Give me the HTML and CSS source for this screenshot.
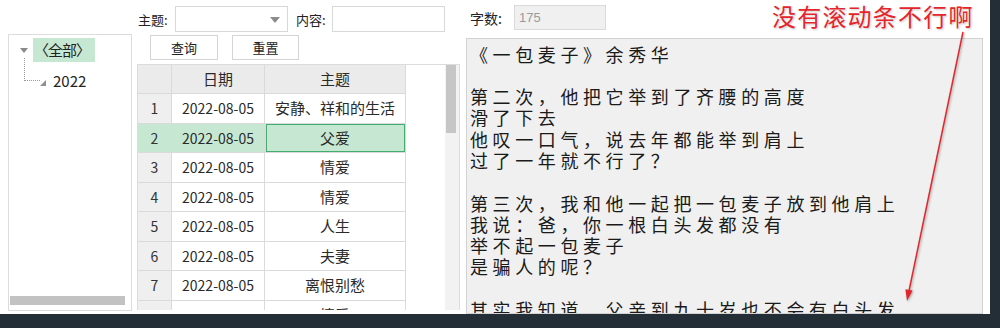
FILE: index.html
```html
<!DOCTYPE html>
<html lang="zh-CN">

<head>
    <meta charset="UTF-8">
    <title>诗歌浏览</title>
    <link rel="stylesheet" href="styles.css">
</head>

<body>
    <div class="window">
        <div class="tree-col">
            <div class="tree-panel">
                <div class="tree-root">
                    <span class="tree-toggle"></span>
                    <span class="tree-label selected">〈全部〉</span>
                </div>
                <div class="tree-child">
                    <span class="tree-leaf"></span>
                    <span class="tree-label">2022</span>
                </div>
                <div class="tree-scroll"><span></span></div>
            </div>
        </div>

        <div class="mid-col">
            <div class="filter-row">
                <label>主题:</label>
                <div class="select-box"><span class="select-arrow"></span></div>
                <label class="second">内容:</label>
                <div class="input-box"></div>
            </div>
            <div class="btn-row">
                <span class="btn">查询</span>
                <span class="btn">重置</span>
            </div>
            <div class="grid-panel">
                <table class="grid">
                    <thead>
                        <tr>
                            <th class="num"></th>
                            <th class="date">日期</th>
                            <th class="topic">主题</th>
                        </tr>
                    </thead>
                    <tbody>
                        <tr>
                            <td class="num">1</td>
                            <td>2022-08-05</td>
                            <td class="topic">安静、祥和的生活</td>
                        </tr>
                        <tr class="current">
                            <td class="num">2</td>
                            <td>2022-08-05</td>
                            <td class="topic focus">父爱</td>
                        </tr>
                        <tr>
                            <td class="num">3</td>
                            <td>2022-08-05</td>
                            <td class="topic">情爱</td>
                        </tr>
                        <tr>
                            <td class="num">4</td>
                            <td>2022-08-05</td>
                            <td class="topic">情爱</td>
                        </tr>
                        <tr>
                            <td class="num">5</td>
                            <td>2022-08-05</td>
                            <td class="topic">人生</td>
                        </tr>
                        <tr>
                            <td class="num">6</td>
                            <td>2022-08-05</td>
                            <td class="topic">夫妻</td>
                        </tr>
                        <tr>
                            <td class="num">7</td>
                            <td>2022-08-05</td>
                            <td class="topic">离恨别愁</td>
                        </tr>
                        <tr>
                            <td class="num">8</td>
                            <td>2022-08-05</td>
                            <td class="topic">情爱</td>
                        </tr>
                    </tbody>
                </table>
                <div class="grid-fill"></div>
                <div class="vscroll"><span></span></div>
            </div>
        </div>

        <div class="text-col">
            <div class="count-row">
                <label>字数:</label>
                <div class="count-box">175</div>
            </div>
            <div class="poem">《一包麦子》余秀华

第二次，他把它举到了齐腰的高度
滑了下去
他叹一口气，说去年都能举到肩上
过了一年就不行了？

第三次，我和他一起把一包麦子放到他肩上
我说：爸，你一根白头发都没有
举不起一包麦子
是骗人的呢？

其实我知道，父亲到九十岁也不会有白头发</div>
        </div>

        <div class="note">没有滚动条不行啊</div>
        <svg class="note-arrow" width="1000" height="328" viewBox="0 0 1000 328">
            <line x1="963" y1="32" x2="909" y2="291" stroke="#e3262b" stroke-width="1.5" />
            <polygon points="907,301 912.6,290.6 905.4,289.2" fill="#e3262b" />
        </svg>
    </div>
</body>

</html>
```

FILE: styles.css
```css
body,
div,
table,
th,
td,
label,
span {
    padding: 0;
    margin: 0;
}

body {
    width: 1000px;
    height: 328px;
    overflow: hidden;
    background: #232e37;
    font-family: "Noto Sans CJK SC", "Noto Sans", sans-serif;
    color: #222;
}

.window {
    position: relative;
    display: flex;
    width: 990px;
    height: 314px;
    background: #fff;
    overflow: hidden;
}

/* 左侧树 */
.tree-col {
    margin-left: 8px;
    width: 124px;
    padding-top: 34px;
    padding-bottom: 3px;
    box-sizing: border-box;
}

.tree-panel {
    position: relative;
    height: 100%;
    border: 1px solid #dcdcdc;
    box-sizing: border-box;
}

.tree-root {
    display: flex;
    align-items: center;
    margin-top: 3px;
    height: 24px;
}

.tree-toggle {
    width: 0;
    height: 0;
    margin-left: 11px;
    margin-right: 5px;
    border-left: 4px solid transparent;
    border-right: 4px solid transparent;
    border-top: 5px solid #8a8a8a;
}

.tree-label {
    font-size: 15px;
    line-height: 24px;
}

.tree-label.selected {
    width: 62px;
    padding-left: 1px;
    box-sizing: border-box;
    background: #c6e8d3;
    letter-spacing: -1px;
}

.tree-child {
    position: relative;
    display: flex;
    align-items: center;
    height: 24px;
    margin-top: 7px;
}

.tree-child::before {
    content: "";
    position: absolute;
    left: 15px;
    top: -11px;
    width: 15px;
    height: 22px;
    border-left: 1px dotted #9a9a9a;
    border-bottom: 1px dotted #9a9a9a;
}

.tree-leaf {
    width: 0;
    height: 0;
    margin-left: 31px;
    margin-right: 7px;
    margin-top: 3px;
    border-left: 6px solid transparent;
    border-bottom: 6px solid #8f8f8f;
}

.tree-scroll {
    position: absolute;
    left: 1px;
    right: 1px;
    bottom: 4px;
    height: 10px;
}

.tree-scroll span {
    display: block;
    width: 115px;
    height: 9px;
    background: #c2c2c2;
}

/* 中间 */
.mid-col {
    margin-left: 5px;
    width: 323px;
    display: flex;
    flex-direction: column;
}

.filter-row {
    display: flex;
    align-items: center;
    margin-top: 6px;
    height: 26px;
    font-size: 13px;
}

.filter-row label {
    width: 38px;
    padding-left: 1px;
    box-sizing: border-box;
}

.filter-row label.second {
    margin-left: 7px;
    width: 37px;
}

.select-box,
.input-box {
    position: relative;
    width: 113px;
    height: 26px;
    border: 1px solid #d8d8d8;
    box-sizing: border-box;
    background: #fff;
}

.select-arrow {
    position: absolute;
    right: 7px;
    top: 10px;
    width: 0;
    height: 0;
    border-left: 5px solid transparent;
    border-right: 5px solid transparent;
    border-top: 6px solid #8c8c8c;
}

.btn-row {
    display: flex;
    gap: 14px;
    margin-top: 3px;
    margin-left: 13px;
}

.btn {
    display: inline-block;
    width: 67px;
    height: 25px;
    line-height: 23px;
    text-align: center;
    font-size: 13px;
    border: 1px solid #d4d4d4;
    box-sizing: border-box;
    background: #fff;
}

.btn:first-child {
    width: 68px;
}

.grid-panel {
    display: flex;
    flex: none;
    margin-top: 4px;
    height: 246px;
    border: 1px solid #dcdcdc;
    border-bottom: none;
    box-sizing: border-box;
    overflow: hidden;
}

.grid {
    width: 268px;
    border-collapse: collapse;
    table-layout: fixed;
    align-self: flex-start;
    font-size: 14px;
    color: #2a2a2a;
}

.grid th,
.grid td {
    height: 28.5px;
    border: 1px solid #dadada;
    text-align: center;
    font-weight: normal;
    padding: 0;
    line-height: 18px;
    white-space: nowrap;
    overflow: hidden;
}

.grid tr:first-child th {
    border-top: none;
}

.grid th:first-child,
.grid td:first-child {
    border-left: none;
}

.grid th {
    height: 28px;
    font-size: 15px;
    background: #ebebeb;
}

.grid th.num {
    width: 33px;
}

.grid th.date {
    width: 92px;
}

.grid td.num {
    background: #efefef;
    color: #333;
}

.grid td.topic {
    font-size: 15px;
}

.grid tr.current td {
    background: #c6e8d3;
}

.grid td.focus {
    outline: 1px solid #43ad6d;
    outline-offset: -2px;
}

.grid-fill {
    flex: 1;
}

.vscroll {
    width: 14px;
    background: #f2f2f2;
}

.vscroll span {
    display: block;
    margin-left: 1px;
    width: 10px;
    height: 68px;
    background: #c6c6c6;
}

/* 右侧正文 */
.text-col {
    margin-left: 6px;
    width: 517px;
    display: flex;
    flex-direction: column;
}

.count-row {
    display: flex;
    align-items: center;
    margin-top: 5px;
    height: 25px;
}

.count-row label {
    width: 48px;
    padding-left: 4px;
    box-sizing: border-box;
    font-size: 14px;
}

.count-box {
    width: 92px;
    height: 25px;
    line-height: 23px;
    padding-left: 4px;
    box-sizing: border-box;
    border: 1px solid #dadada;
    background: #f0f0f0;
    color: #9a9a9a;
    font-size: 13px;
    font-family: "Liberation Sans", sans-serif;
}

.poem {
    flex: none;
    margin-top: 8px;
    height: 276px;
    padding: 4.5px 0 0 3px;
    box-sizing: border-box;
    border: 1px solid #d2d2d2;
    background: #f0f0f0;
    overflow: hidden;
    white-space: pre;
    font-size: 18px;
    letter-spacing: 4.6px;
    line-height: 21.3px;
    color: #1a1a1a;
}

/* 标注 */
.note {
    position: absolute;
    left: 772px;
    top: 1px;
    font-size: 24px;
    letter-spacing: 1.2px;
    line-height: 30px;
    color: #e3262b;
    text-shadow: 0 0 2px #fff, 1px 1px 2px rgba(0, 0, 0, 0.25);
}

.note-arrow {
    position: absolute;
    left: 0;
    top: 0;
    filter: drop-shadow(1px 1px 1px rgba(0, 0, 0, 0.3));
}
```
